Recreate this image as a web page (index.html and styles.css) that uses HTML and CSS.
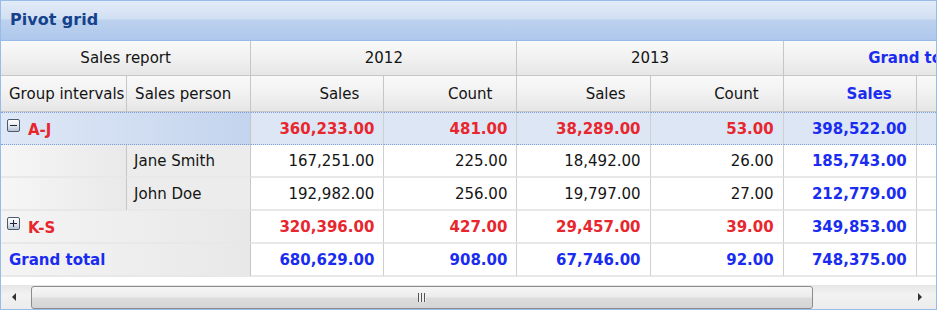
FILE: index.html
```html
<!DOCTYPE html>
<html lang="en">
<head>
    <meta charset="UTF-8">
    <title>Pivot grid</title>
    <link rel="stylesheet" href="styles.css">
</head>
<body>
    <div class="panel">
        <div class="panel-title">Pivot grid</div>

        <div class="grid-view">
            <table class="pivot">
                <colgroup>
                    <col class="c-group">
                    <col class="c-person">
                    <col class="c-val"><col class="c-val">
                    <col class="c-val"><col class="c-val">
                    <col class="c-val"><col class="c-val">
                </colgroup>
                <thead>
                    <tr class="hdr-row1">
                        <th colspan="2" class="hdr center">Sales report</th>
                        <th colspan="2" class="hdr center">2012</th>
                        <th colspan="2" class="hdr center">2013</th>
                        <th colspan="2" class="hdr center total">Grand total</th>
                    </tr>
                    <tr class="hdr-row2">
                        <th class="hdr left">Group intervals</th>
                        <th class="hdr left">Sales person</th>
                        <th class="hdr right">Sales</th>
                        <th class="hdr right">Count</th>
                        <th class="hdr right">Sales</th>
                        <th class="hdr right">Count</th>
                        <th class="hdr right total">Sales</th>
                        <th class="hdr right total"></th>
                    </tr>
                </thead>
                <tbody>
                    <tr class="row-group selected">
                        <td colspan="2" class="rh rh-group"><span class="toggle minus"></span><span class="grp">A-J</span></td>
                        <td class="num red">360,233.00</td>
                        <td class="num red">481.00</td>
                        <td class="num red">38,289.00</td>
                        <td class="num red">53.00</td>
                        <td class="num blue">398,522.00</td>
                        <td class="num blue"></td>
                    </tr>
                    <tr class="row-item">
                        <td class="rh rh-blank"></td>
                        <td class="rh rh-person">Jane Smith</td>
                        <td class="num">167,251.00</td>
                        <td class="num">225.00</td>
                        <td class="num">18,492.00</td>
                        <td class="num">26.00</td>
                        <td class="num blue">185,743.00</td>
                        <td class="num blue"></td>
                    </tr>
                    <tr class="row-item">
                        <td class="rh rh-blank"></td>
                        <td class="rh rh-person">John Doe</td>
                        <td class="num">192,982.00</td>
                        <td class="num">256.00</td>
                        <td class="num">19,797.00</td>
                        <td class="num">27.00</td>
                        <td class="num blue">212,779.00</td>
                        <td class="num blue"></td>
                    </tr>
                    <tr class="row-group">
                        <td colspan="2" class="rh rh-group"><span class="toggle plus"></span><span class="grp">K-S</span></td>
                        <td class="num red">320,396.00</td>
                        <td class="num red">427.00</td>
                        <td class="num red">29,457.00</td>
                        <td class="num red">39.00</td>
                        <td class="num blue">349,853.00</td>
                        <td class="num blue"></td>
                    </tr>
                    <tr class="row-total">
                        <td colspan="2" class="rh rh-group"><span class="grand">Grand total</span></td>
                        <td class="num blue">680,629.00</td>
                        <td class="num blue">908.00</td>
                        <td class="num blue">67,746.00</td>
                        <td class="num blue">92.00</td>
                        <td class="num blue">748,375.00</td>
                        <td class="num blue"></td>
                    </tr>
                </tbody>
            </table>
        </div>

        <!-- Horizontal scroll bar -->
        <div class="hscroll">
            <div class="arrow arrow-left"></div>
            <div class="track">
                <div class="thumb"><span class="grip"></span></div>
            </div>
            <div class="arrow arrow-right"></div>
        </div>
    </div>
</body>
</html>
```

FILE: styles.css
```css
* {
    margin: 0;
    padding: 0;
    box-sizing: border-box;
}

body {
    font-family: "DejaVu Sans", Verdana, sans-serif;
    font-size: 15px;
    background: white;
    color: #141414;
}

.panel {
    width: 937px;
    border: 1px solid #99bbe8;
    background: white;
}

.panel-title {
    height: 40px;
    padding-left: 9px;
    line-height: 38px;
    font-weight: bold;
    font-size: 16px;
    color: #15428b;
    border-bottom: 1px solid #99bbe8;
    background: linear-gradient(to bottom, #e2ebf8 0%, #d2e0f3 45%, #bcd1ee 50%, #aec8ec 100%);
}

.grid-view {
    overflow: hidden;
    padding-bottom: 8px;
}

.pivot {
    table-layout: fixed;
    border-collapse: separate;
    border-spacing: 0;
    width: 1049px;
}

.c-group { width: 126px; }
.c-person { width: 124px; }
.c-val { width: 133px; }

th, td {
    white-space: nowrap;
    overflow: hidden;
    border-right: 1px solid #c6c6c6;
    border-bottom: 1px solid #c6c6c6;
}

/* header cells */
.hdr {
    font-weight: normal;
    background: linear-gradient(to bottom, #f9f9f9 0%, #f1f1f1 50%, #e6e6e6 100%);
}

.hdr-row1 th { height: 35px; }
.hdr-row2 th { height: 36px; }

.hdr.center { text-align: center; }
.hdr.left { text-align: left; padding-left: 8px; }
.hdr.right { text-align: right; padding-right: 24px; }
.hdr.total { color: #1a2cf0; font-weight: bold; }
.hdr-row1 .hdr.total { text-align: center; }

/* data rows */
tbody td {
    height: 33px;
    border-bottom: 2px solid #e8e8e8;
    border-right: 1px solid #cfcfcf;
}

.rh {
    background: linear-gradient(to right, #f4f4f4 0%, #e8e8e8 100%);
    border-right: 1px solid #c6c6c6;
}

.rh-blank {
    background: linear-gradient(to right, #f6f6f6 0%, #e9e9e9 100%);
}

.rh-person {
    padding-left: 7px;
    background: #ececec;
}

.rh-group {
    padding-left: 6px;
    font-weight: bold;
}

.num {
    text-align: right;
    padding-right: 9px;
    background: white;
}

.row-group .num,
.row-total .num {
    font-weight: bold;
}

.red { color: #e8262e; }
.blue { color: #1a2cf0; font-weight: bold; }

.grp { color: #e8262e; margin-left: 8px; }
.grand { color: #1a2cf0; padding-left: 2px; }

.selected td {
    border-top: 1px dotted #7f9fd3;
    border-bottom: 1px dotted #7f9fd3;
}

.selected .num {
    background: #dde6f5;
}

.selected .rh-group {
    background: linear-gradient(to right, #dfe8f6 0%, #cfdcf1 60%, #c3d4ee 100%);
}

.toggle {
    display: inline-block;
    position: relative;
    width: 13px;
    height: 13px;
    vertical-align: 3px;
    border: 1px solid #4e5a6e;
    border-radius: 2px;
    background: linear-gradient(to bottom, #ffffff 0%, #dfe4ec 60%, #b8c3d3 100%);
}

.toggle::before,
.toggle::after {
    content: "";
    position: absolute;
    background: #1d2333;
}

.toggle::before {
    left: 2px;
    top: 5px;
    width: 7px;
    height: 1px;
}

.toggle.plus::after {
    left: 5px;
    top: 2px;
    width: 1px;
    height: 7px;
}

/* scroll bar */
.hscroll {
    display: flex;
    align-items: center;
    height: 24px;
    background: linear-gradient(to bottom, #e6e6e6 0%, #f2f2f2 40%, #ececec 100%);
}

.arrow {
    width: 16px;
    height: 24px;
    position: relative;
    flex: none;
}

.arrow-left { margin-left: 6px; }
.arrow-right { margin-left: auto; margin-right: 8px; }

.arrow-left::before,
.arrow-right::before {
    content: "";
    position: absolute;
    top: 8px;
    border-top: 4px solid transparent;
    border-bottom: 4px solid transparent;
}

.arrow-left::before {
    left: 5px;
    border-right: 4px solid #333;
}

.arrow-right::before {
    left: 6px;
    border-left: 4px solid #333;
}

.track {
    width: 789px;
    margin-left: 8px;
    height: 24px;
    display: flex;
    align-items: center;
}

.thumb {
    width: 782px;
    height: 23px;
    border: 1px solid #8c8c8c;
    border-radius: 3px;
    background: linear-gradient(to bottom, #f6f6f6 0%, #ececec 45%, #dcdcdc 55%, #d4d4d4 100%);
    display: flex;
    align-items: center;
    justify-content: center;
}

.grip {
    width: 8px;
    height: 9px;
    background: repeating-linear-gradient(to right, #555 0, #555 1px, #f0f0f0 1px, #f0f0f0 3px);
}
```
